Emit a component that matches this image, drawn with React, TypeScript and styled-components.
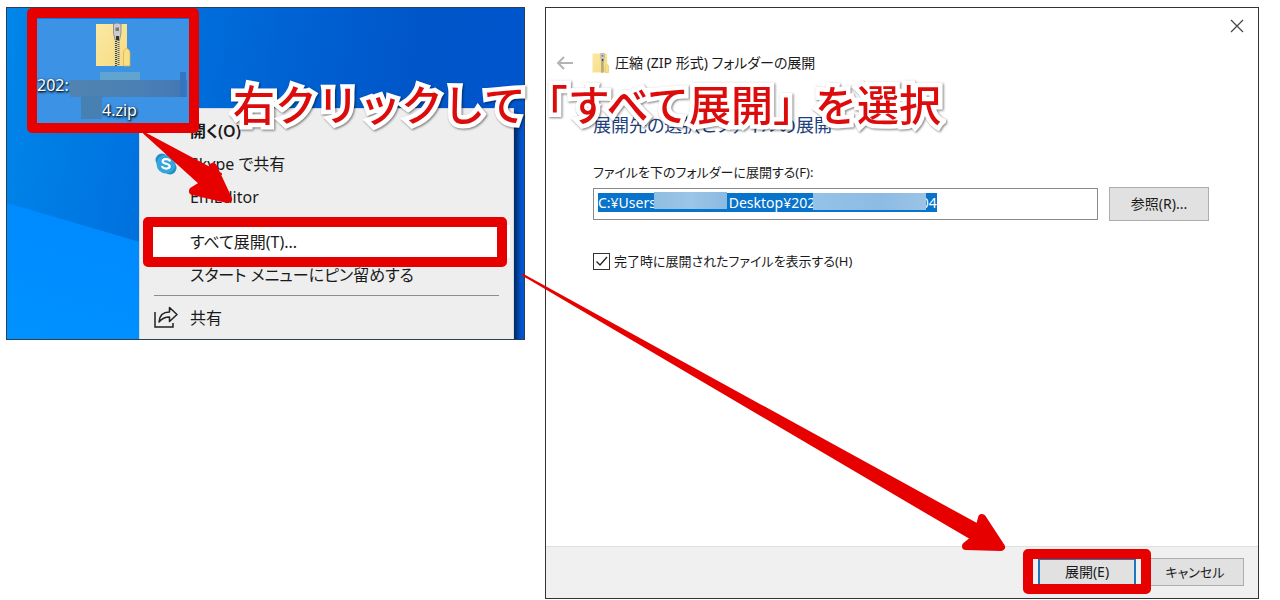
import React, { useEffect, useRef } from "react";
import styled, { createGlobalStyle, css } from "styled-components";

const RED = "#e60000";

const GlobalStyle = createGlobalStyle`
  *, *::before, *::after { box-sizing: border-box; }
  body {
    margin: 0;
    background: #fff;
    color: #1a1a1a;
    font-family: "Noto Sans", "Noto Sans CJK JP", sans-serif;
    font-feature-settings: "palt";
  }
  button, input { font: inherit; font-feature-settings: inherit; color: inherit; }
`;

const Page = styled.main`
  position: relative;
  display: grid;
  grid-template-columns: minmax(0, 519fr) minmax(0, 714fr);
  align-items: start;
  gap: 20px;
  min-height: 100vh;
  padding: 7px 21px 1px 6px;
`;

const marked = css`
  position: relative;
  &::after {
    content: "";
    position: absolute;
    border: 10px solid ${RED};
    border-radius: 5px;
    pointer-events: none;
    z-index: 2;
  }
`;

/* Desktop with its context menu */

const Desktop = styled.section`
  position: relative;
  height: 333px;
  padding: 11px 30px;
  overflow: hidden;
  border: 1px solid #2b3f55;
  background: linear-gradient(100deg, #0086ea 0%, #0074e0 25%, #0062d3 50%, #0055c8 75%, #0056d0 100%);
  &::before {
    content: "";
    position: absolute;
    left: 0;
    top: 195px;
    bottom: 0;
    width: 133px;
    background: linear-gradient(16deg, #0092ff, #0088ff);
    clip-path: polygon(0 0, 100% 39px, 100% 100%, 0 100%);
  }
`;

const DesktopFile = styled.div`
  ${marked}
  display: flex;
  flex-direction: column;
  align-items: center;
  width: 152px;
  height: 104px;
  padding-top: 4px;
  background: #3c92e4;
  z-index: 2;
  &::after { inset: -11px -10px -10px; }
`;

const FileName = styled.div`
  position: relative;
  align-self: stretch;
  margin-top: 6px;
  color: #fff;
  font-size: 16px;
  line-height: 25px;
  text-shadow: 1px 1px 2px #000, 0 1px 3px #0a2848;
`;

const FileNameEnd = styled.div`
  padding-left: 65px;
`;

const Mosaic = styled.span<{ $x: number; $y: number; $w: number; $h: number; $fill: string }>`
  position: absolute;
  left: ${(p) => p.$x}px;
  top: ${(p) => p.$y}px;
  width: ${(p) => p.$w}px;
  height: ${(p) => p.$h}px;
  background: ${(p) => p.$fill};
`;

const Menu = styled.ul`
  position: absolute;
  left: 132px;
  right: 10px;
  top: 100px;
  margin: 0;
  padding: 5px 3px;
  list-style: none;
  background: #eee;
  border: 1px solid #d5d9de;
  box-shadow: 4px 4px 4px rgba(0, 0, 0, 0.5);
`;

const MenuItem = styled.li<{ $active?: boolean }>`
  ${(p) => p.$active && css`
    ${marked}
    background: #fff;
    margin-top: 12px;
    &::after { inset: -8px 3px -9px 0; }
  `}
`;

const MenuButton = styled.button<{ $bold?: boolean }>`
  display: grid;
  grid-template-columns: 24px 1fr;
  gap: 12px;
  align-items: center;
  width: 100%;
  height: 33px;
  padding: 0 11px;
  border: 0;
  background: transparent;
  text-align: left;
  font-size: 16px;
  line-height: 24px;
  font-weight: ${(p) => (p.$bold ? 600 : 400)};
`;

const MenuLabel = styled.span`
  grid-column: 2;
`;

const Separator = styled.li`
  height: 1px;
  margin: 4px 11px 5px;
  background: #8c8c8c;
`;

/* Extraction dialog */

const Dialog = styled.section`
  display: flex;
  flex-direction: column;
  min-height: calc(100vh - 8px);
  border: 1px solid #333;
  background: #fff;
  font-size: 14px;
  line-height: 20px;
`;

const TitleBar = styled.div`
  display: flex;
  justify-content: flex-end;
  padding: 7px 10px 0;
`;

const IconButton = styled.button`
  display: grid;
  place-items: center;
  width: 22px;
  height: 22px;
  padding: 0;
  border: 0;
  background: transparent;
`;

const DialogHeader = styled.header`
  display: flex;
  align-items: center;
  gap: 16px;
  height: 24px;
  margin-top: 14px;
  padding-left: 8px;
`;

const DialogTitle = styled.span`
  display: flex;
  align-items: center;
  gap: 6px;
`;

const DialogBody = styled.form`
  flex: 1;
  padding: 36px 49px 24px 47px;
`;

const Heading = styled.h1`
  margin: 0;
  color: #1f3f7c;
  font-size: 18px;
  line-height: 28px;
  font-weight: 400;
`;

const FieldLabel = styled.label`
  display: block;
  margin-top: 23px;
  font-size: 13px;
`;

const FieldRow = styled.div`
  display: flex;
  align-items: center;
  gap: 11px;
  margin-top: 5px;
`;

const PathField = styled.div`
  position: relative;
  flex: 1;
`;

const PathInput = styled.input`
  display: block;
  width: 100%;
  height: 32px;
  padding: 0 4px 3px;
  border: 1px solid #8a8a8a;
  border-radius: 0;
  outline: 0;
  background: #fff;
  line-height: 20px;
  white-space: pre;
  &::selection { background: #0873ca; color: #fff; }
`;

const Button = styled.button<{ $primary?: boolean }>`
  min-width: 98px;
  height: 28px;
  padding: 0 8px;
  border: ${(p) => (p.$primary ? "2px solid #1f76bd" : "1px solid #adadad")};
  background: #e1e1e1;
`;

const CancelButton = styled(Button)`
  font-size: 13px;
`;

const BrowseButton = styled(Button)`
  min-width: 100px;
  height: 34px;
`;

const CheckLabel = styled.label`
  display: flex;
  align-items: center;
  gap: 4px;
  margin-top: 30px;
  font-size: 13px;
`;

const CheckBox = styled.input`
  appearance: none;
  width: 17px;
  height: 17px;
  margin: 0;
  border: 1px solid #333;
  background: #fff url("data:image/svg+xml,%3Csvg xmlns='http://www.w3.org/2000/svg' viewBox='0 0 15 15'%3E%3Cpath d='M2.5 7.5 6 11l7-8' fill='none' stroke='%23222' stroke-width='1.3'/%3E%3C/svg%3E");
`;

const Footer = styled.footer`
  display: flex;
  justify-content: flex-end;
  align-items: center;
  gap: 10px;
  height: 52px;
  padding: 0 14px 2px;
  border-top: 1px solid #dfdfdf;
  background: #f0f0f0;
`;

const MarkedAction = styled.div`
  ${marked}
  &::after { inset: -9px -15px -8px; }
`;

/* Annotations drawn over both windows */

const Caption = styled.p`
  position: absolute;
  left: 233px;
  top: 73px;
  margin: 0;
  color: #dc0c0c;
  font-family: "Noto Sans CJK JP", sans-serif;
  font-feature-settings: normal;
  font-size: 42px;
  line-height: 60px;
  font-weight: 500;
  white-space: nowrap;
  -webkit-text-stroke: 9px #fff;
  paint-order: stroke fill;
  stroke-linejoin: round;
  filter: drop-shadow(1px 1px 1px rgba(0, 0, 0, 0.5));
  z-index: 5;
`;

const Arrows = styled.svg`
  position: absolute;
  left: 0;
  top: 0;
  width: 100%;
  pointer-events: none;
  z-index: 4;
`;

const ZipFolder = ({ width, height }: { width: number; height: number }) => (
  <svg width={width} height={height} viewBox="0 0 36 44" preserveAspectRatio="none" aria-hidden="true">
    <defs>
      <linearGradient id="folder" x1="0" y1="0" x2="1" y2="1">
        <stop offset="0" stopColor="#fbe9a4" />
        <stop offset="1" stopColor="#f5da80" />
      </linearGradient>
    </defs>
    <path d="M1 1h31v25l3 2v15H1z" fill="url(#folder)" />
    <path d="M28.500 43V30q0-3 3-5 3.500 2 3.500 5v13z" fill="#f9df86" stroke="#d5ae45" strokeWidth=".7" />
    <path d="M19.500 16h5.500v27h-5.500z" fill="#e3d6a0" />
    <path d="M21 16v27" stroke="#4b4638" strokeWidth="2" strokeDasharray="1 1" />
    <path d="M23.500 17v26" stroke="#6d6550" strokeWidth="2" strokeDasharray="1 1" />
    <path d="M18.500 1q3.500-2 7.500 0v9l-1.500 7h-4.500L18.500 10z" fill="#c9cdd0" stroke="#777" strokeWidth=".7" />
    <path d="M20.500 4.500h3.500v3.500h-3.500z" fill="#777" />
    <path d="M21 13h3v4h-3z" fill="#33322e" />
  </svg>
);

const SkypeIcon = () => (
  <svg width="24" height="24" viewBox="0 0 24 24" aria-hidden="true">
    <circle cx="8" cy="8" r="6.500" fill="#1d8fc9" />
    <circle cx="16" cy="16" r="6.500" fill="#1d8fc9" />
    <circle cx="12" cy="12" r="9.500" fill="#35a6dc" />
    <path d="M15.800 8.600C14.500 6.500 8.600 6.400 8.600 9.300c0 3.200 7.100 1.700 7.100 5 0 3-6.200 2.900-7.500.5" fill="none" stroke="#fff" strokeWidth="2.200" strokeLinecap="round" />
  </svg>
);

const ShareIcon = () => (
  <svg width="24" height="24" viewBox="0 0 24 24" fill="none" stroke="#222" strokeWidth="1.500" aria-hidden="true">
    <path d="M1 6v15h18v-4" />
    <path d="M5 16C5.500 9 9 6 15.500 6V1.500L23 8.500l-7.500 7V11C11 11 8 12.200 5 16z" strokeLinejoin="round" />
  </svg>
);

const menuTop = [
  { label: "開く(O)", bold: true },
  { label: "Skype で共有", icon: <SkypeIcon /> },
  { label: "EmEditor" },
  { label: "すべて展開(T)...", active: true },
  { label: "スタート メニューにピン留めする" },
];

const folderPath = "C:¥Users" + "\u00a0".repeat(20) + "Desktop¥202" + "\u00a0".repeat(29) + "04";

export default function App() {
  const pathRef = useRef<HTMLInputElement>(null);

  useEffect(() => {
    pathRef.current?.focus();
    pathRef.current?.select();
  }, []);

  return (
    <>
      <GlobalStyle />
      <Page>
        <Desktop>
          <DesktopFile>
            <ZipFolder width={36} height={44} />
            <FileName>
              202:
              <FileNameEnd>4.zip</FileNameEnd>
              <Mosaic $x={63} $y={-1} $w={40} $h={9} $fill="#62a4d0" />
              <Mosaic $x={33} $y={7} $w={117} $h={17} $fill="linear-gradient(90deg, #5083b0, #4a80b5 60%, #4377b3)" />
              <Mosaic $x={44} $y={23} $w={21} $h={23} $fill="#4781b4" />
              <Mosaic $x={143} $y={-1} $w={6} $h={25} $fill="#3575c0" />
            </FileName>
          </DesktopFile>
          <Menu>
            {menuTop.map((item) => (
              <MenuItem key={item.label} $active={item.active}>
                <MenuButton type="button" $bold={item.bold}>
                  {item.icon}
                  <MenuLabel>{item.label}</MenuLabel>
                </MenuButton>
              </MenuItem>
            ))}
            <Separator role="separator" />
            <MenuItem>
              <MenuButton type="button">
                <ShareIcon />
                <MenuLabel>共有</MenuLabel>
              </MenuButton>
            </MenuItem>
          </Menu>
        </Desktop>

        <Dialog role="dialog" aria-labelledby="dialog-heading">
          <TitleBar>
            <IconButton type="button" aria-label="閉じる">
              <svg width="14" height="14" viewBox="0 0 14 14" stroke="#444" strokeWidth="1.200">
                <path d="M1 1l12 12M13 1L1 13" />
              </svg>
            </IconButton>
          </TitleBar>
          <DialogHeader>
            <IconButton type="button" aria-label="戻る">
              <svg width="18" height="14" viewBox="0 0 18 14" fill="none" stroke="#b4b4b4" strokeWidth="2">
                <path d="M17 7H2M8 1L2 7l6 6" />
              </svg>
            </IconButton>
            <DialogTitle>
              <ZipFolder width={17} height={20} />
              圧縮 (ZIP 形式) フォルダーの展開
            </DialogTitle>
          </DialogHeader>
          <DialogBody id="extract" onSubmit={(e) => e.preventDefault()}>
            <Heading id="dialog-heading">展開先の選択とファイルの展開</Heading>
            <FieldLabel htmlFor="path">ファイルを下のフォルダーに展開する(F):</FieldLabel>
            <FieldRow>
              <PathField>
                <PathInput id="path" ref={pathRef} defaultValue={folderPath} />
                <Mosaic $x={61} $y={4} $w={73} $h={17} $fill="linear-gradient(90deg, #8fbde2, #9cc5e7 50%, #8abae2)" />
                <Mosaic $x={220} $y={5} $w={113} $h={17} $fill="linear-gradient(90deg, #95c2e6, #8dbbe2 60%, #9bc4e6)" />
              </PathField>
              <BrowseButton type="button">参照(R)...</BrowseButton>
            </FieldRow>
            <CheckLabel>
              <CheckBox type="checkbox" defaultChecked />
              完了時に展開されたファイルを表示する(H)
            </CheckLabel>
          </DialogBody>
          <Footer>
            <MarkedAction>
              <Button type="submit" form="extract" $primary>展開(E)</Button>
            </MarkedAction>
            <CancelButton type="button">キャンセル</CancelButton>
          </Footer>
        </Dialog>

        <Arrows viewBox="0 0 1280 600" aria-hidden="true">
          <g fill={RED} stroke={RED} strokeLinejoin="round">
            <path d="M144 133L221 174L207 190Z" strokeWidth="2" />
            <path d="M213 167L228 199L193 191L206 183Z" strokeWidth="8" />
            <path d="M523 275L982 527L975 541Z" strokeWidth="2" />
            <path d="M982 518L1001 547L966 546L977 537Z" strokeWidth="8" />
          </g>
        </Arrows>
        <Caption>右クリックして「すべて展開」を選択</Caption>
      </Page>
    </>
  );
}
